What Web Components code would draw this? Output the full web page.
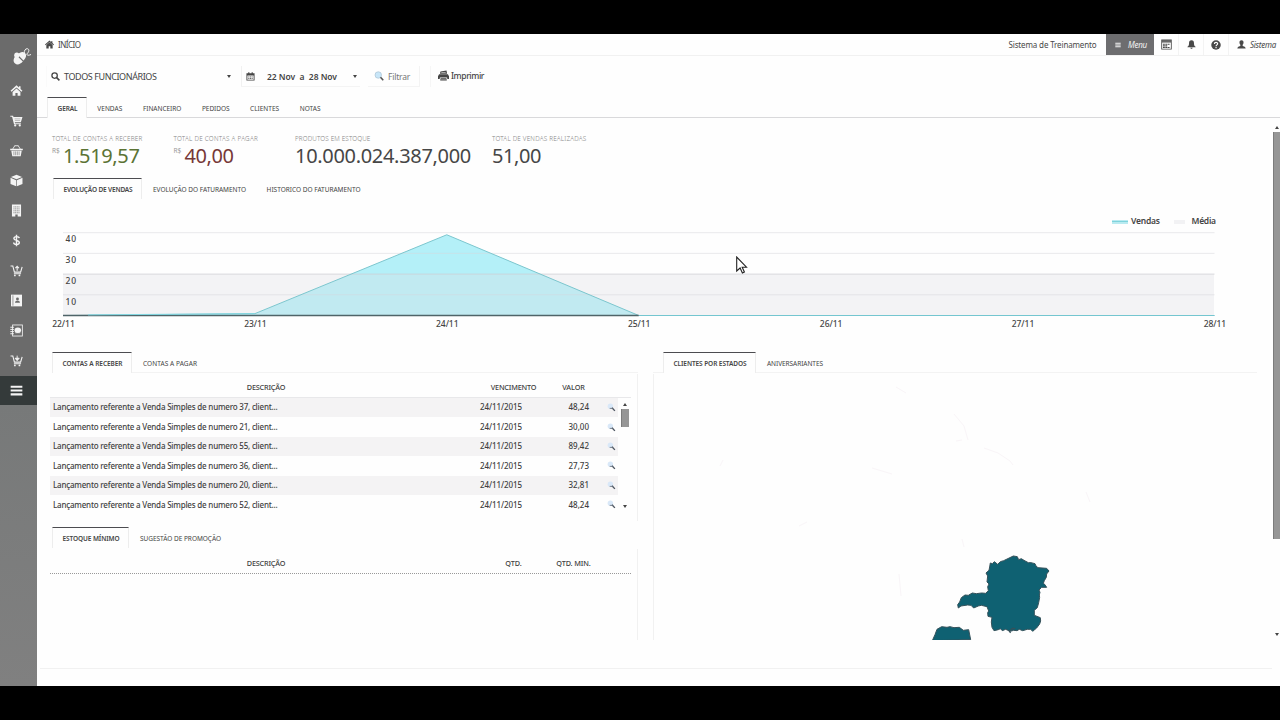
<!DOCTYPE html>
<html lang="pt-BR">
<head>
<meta charset="utf-8">
<title>Início</title>
<style>
  body {
    margin: 0;
    width: 1280px;
    height: 720px;
    overflow: hidden;
    background: #000;
    font-family: "Noto Sans", "Open Sans", sans-serif;
    color: #444;
  }
</style>
</head>
<body>
<dashboard-page></dashboard-page>

<script>
const ICONS = {
  logo: `<g transform="rotate(45 8 12)"><path d="M3.800 11.300C3.800 7.500 5 5 8 5s4.200 2.500 4.200 6.300z"/><path d="M3.500 12.500h9c.3 4-1.500 6.800-4.500 6.800s-4.800-2.800-4.500-6.800z"/></g><circle cx="4.800" cy="9.200" r="2.600"/><path d="M12.300 7.500c-.3-3 1.200-5 3-4.800 2.200.3 1.800 3 .2 4.500s0 3 3.500 1.300" fill="none" stroke="currentColor" stroke-width="1"/>`,
  home: `<path d="M10 1.800.8 10.300l1.600 1.700L10 5.200l7.600 6.800 1.600-1.700-3-2.700V3.500h-2.400v1.800z"/><path d="M4 12.200 10 7l6 5.200V18h-4.300v-4.300H8.300V18H4z"/>`,
  cart: `<path d="M.5 2.500h4.200l.7 2.200h13.800l-2.500 8H7.400l.4 1.500h8.900v1.500H6.200L3.200 4.300H.5z"/><circle cx="8" cy="17.600" r="1.700"/><circle cx="15" cy="17.600" r="1.700"/><path d="M7 7.500h9M7.500 10h8" stroke="#6b6b6b" stroke-width=".6"/>`,
  basket: `<path d="M.3 7.200h19.400v2.300H.3zM2 10.300h16L16.500 19h-13z"/><path d="M4 8 7.500 2.500M16 8l-3.500-5.500M7 2.700h6" stroke="currentColor" stroke-width="1.300"/><path d="M6 11.300v6M8.700 11.300v6M11.300 11.300v6M14 11.300v6" stroke="#6b6b6b" stroke-width=".9"/>`,
  cube: `<path d="M10 1 18.500 4.500 10 8.200 1.500 4.500zM.8 5.800l8.700 3.700v9.500L.8 15.300zM19.200 5.800l-8.700 3.700v9.500l8.700-3.700z"/>`,
  building: `<path d="M3 .8h14v18.400h-5.200v-3H8.200v3H3z"/><path d="M5.300 4.500h9.400M5.300 7.500h9.400M5.300 10.500h9.400M5.300 13.500h9.400" stroke="#6b6b6b" stroke-width="1.200" stroke-dasharray="1.700 .85"/>`,
  dollar: `<path d="M14.300 6.500C14 4.800 12.300 4 10 4 7.600 4 6 5 6 6.800c0 4 8.300 2 8.300 6.300 0 2-1.800 3-4.300 3-2.600 0-4.200-1-4.400-3M10 1v18" fill="none" stroke="currentColor" stroke-width="2.200"/>`,
  cartUp: `<path d="M.8 3h3.500l2.500 9.500h9.500l2.400-8M6 15h11" fill="none" stroke="currentColor" stroke-width="1.700"/><circle cx="7.500" cy="17.600" r="1.400"/><circle cx="14.500" cy="17.600" r="1.400"/><path d="M11 10.500V4M8.300 6.300 11 3.500l2.700 2.800" fill="none" stroke="currentColor" stroke-width="1.700"/>`,
  cartDown: `<path d="M.8 3h3.500l2.500 9.500h9.500l2.400-8M6 15h11" fill="none" stroke="currentColor" stroke-width="1.700"/><circle cx="7.500" cy="17.600" r="1.400"/><circle cx="14.500" cy="17.600" r="1.400"/><path d="M11 2.500v6M7.800 6.500h6.400L11 10.200z" stroke="currentColor" stroke-width="1.400"/>`,
  contact: `<path d="M1.500 1h17v18h-17z"/><path d="M4.500 2v16" stroke="#6b6b6b" stroke-width="1"/><circle cx="11.500" cy="7.500" r="2.200" fill="#6b6b6b"/><path d="M7.700 13.500c.2-2.500 1.800-3.500 3.800-3.500s3.600 1 3.800 3.500z" fill="#6b6b6b"/>`,
  agenda: `<rect x="4" y="1.500" width="15" height="17" fill="none" stroke="currentColor" stroke-width="1.300"/><path d="M.5 5h5.500M.5 8.300H6M.5 11.700H6M.5 15H6" stroke="currentColor" stroke-width="1.500"/><ellipse cx="12" cy="9.700" rx="5" ry="4.200"/><path d="M8 13.500h8" stroke="currentColor" stroke-width="1"/>`,
  bars: `<path d="M1 2.500h18v3.300H1zM1 8.300h18v3.300H1zM1 14.200h18v3.300H1z"/>`,
  house: `<path d="M10 1 0 10l1.500 1.700L10 4.500l8.500 7.200L20 10l-3.500-3.200V2.500h-3v1.700z"/><path d="M3 11 10 5l7 6v8h-5.200v-5H8.200v5H3z"/>`,
  search: `<circle cx="8" cy="8" r="6" fill="none" stroke="currentColor" stroke-width="2.800"/><path d="m12 12 6.700 6.700" stroke="currentColor" stroke-width="3.500"/>`,
  calendar: `<path d="M1 3h4V.8h2.500V3h5V.8H15V3h4v16H1zM3 8v9h14V8z" fill-rule="evenodd"/><path d="M5 11h10M5 14.500h10" stroke="currentColor" stroke-width="1.800" stroke-dasharray="2.500 1.200"/>`,
  lens: `<circle cx="8.500" cy="8" r="6.500" fill="#c8e6f8" stroke="#a9bfd0" stroke-width="1.300"/><path d="m13 12.500 5.500 6" stroke="#555" stroke-width="3.200"/>`,
  rowLens: `<circle cx="7.500" cy="7" r="6" fill="#d9e8f8"/><path d="m11 10.500 6.500 7" stroke="#4d5560" stroke-width="3"/><path d="M6 12h8" stroke="#66707c" stroke-width="1.800"/>`,
  printer: `<path d="M4.500 2.500 15.500 1l1 6h-13zM2 7.500h16l2 4v5H17l-.5-3h-13l-.5 3H0v-5z"/><path d="M5 14.500h10l1 4.500H4z"/><path d="M6 4.500h8M5.500 16.500h9" stroke="#fff" stroke-width="1"/>`,
  window: `<path d="M.5 1h19v18H.5zM2 6.500v11h16v-11z" fill-rule="evenodd"/><path d="M3.500 9.500h13M3.500 12.500h8M3.500 15.500h13" stroke="currentColor" stroke-width="2.100" stroke-dasharray="3.500 .8"/><path d="M2 3.700h16" stroke="#bbb" stroke-width="1"/>`,
  bell: `<path d="M10 .8c4.200 0 5.500 3 5.500 6.500 0 4.500 1 6 3.500 7.700v1.300H1V15c2.500-1.700 3.500-3.200 3.500-7.700C4.500 3.800 5.800.8 10 .8zM7.500 17h5c0 3-5 3-5 0z"/>`,
  help: `<circle cx="10" cy="10" r="9.500"/><path d="M6.800 8C6.800 3.800 13.300 4 13.300 7.600c0 2.200-3.200 2.200-3.200 4.700M10.100 14v2.300" fill="none" stroke="#fff" stroke-width="2.300"/>`,
  user: `<path d="M10 .5c3.500 0 4.800 2.500 4.500 5.500-.2 2.300-1.300 3.700-2 4.500v2.300c1 1.300 6.500 1.700 6.800 6.200H.7c.3-4.500 5.800-4.900 6.800-6.200v-2.300c-.7-.8-1.800-2.200-2-4.500C5.200 3 6.500.5 10 .5z"/>`
};

class UiIcon extends HTMLElement {
  constructor() {
    super();
    this.attachShadow({ mode: "open" });
  }

  connectedCallback() {
    const size = this.getAttribute("size") || 12;
    this.shadowRoot.innerHTML = `
      <style>
        :host { display: block; flex: none; width: ${size}px; height: ${size}px; }
        svg { display: block; width: 100%; height: 100%; fill: currentColor; }
      </style>
      <svg viewBox="0 0 20 20">${ICONS[this.getAttribute("name")] || ""}</svg>
    `;
  }
}

// Label whose tracking is adjusted so that the text fills the width in "w"
class FitText extends HTMLElement {
  constructor() {
    super();
    this.attachShadow({ mode: "open" });
    this.shadowRoot.innerHTML = `
      <style>
        :host { display: block; flex: none; white-space: nowrap; }
        span { display: inline-block; }
      </style>
      <span><slot></slot></span>
    `;
  }

  connectedCallback() {
    const width = parseFloat(this.getAttribute("w"));
    const span = this.shadowRoot.querySelector("span");
    const natural = span.getBoundingClientRect().width;
    const count = this.textContent.length;
    if (!width || !natural || !count) return;
    span.style.letterSpacing = `${(width - natural) / count}px`;
  }
}

class SideBar extends HTMLElement {
  constructor() {
    super();
    this.attachShadow({ mode: "open" });
  }

  connectedCallback() {
    const items = ["home", "cart", "basket", "cube", "building", "dollar", "cartUp", "contact", "agenda", "cartDown"];
    this.shadowRoot.innerHTML = `
      <style>
        :host {
          display: flex;
          flex-direction: column;
          background: linear-gradient(#6b6b6b 0, #6b6b6b 371px, #777979 371px, #808080 100%);
          color: #f4f4f4;
        }
        .logo { height: 41px; display: flex; align-items: center; justify-content: center; padding: 3px 0 0 6px; box-sizing: border-box; }
        .item { height: 30.1px; display: flex; align-items: center; justify-content: center; padding-right: 4px; }
        .active { background: #343a3a; height: 29px; }
      </style>
      <div class="logo"><ui-icon name="logo" size="20"></ui-icon></div>
      ${items.map((name) => `<div class="item"><ui-icon name="${name}" size="13"></ui-icon></div>`).join("")}
      <div class="item active"><ui-icon name="bars" size="13"></ui-icon></div>
    `;
  }
}

class TopBar extends HTMLElement {
  constructor() {
    super();
    this.attachShadow({ mode: "open" });
  }

  connectedCallback() {
    this.shadowRoot.innerHTML = `
      <style>
        :host {
          display: flex;
          align-items: stretch;
          height: 21px;
          border-bottom: 1px solid #f1f1f1;
          font-size: 8px;
          color: #484848;
        }
        div { display: flex; align-items: center; box-sizing: border-box; }
        .crumb { padding-left: 8px; gap: 4px; flex: 1; }
        .company { padding-right: 9.500px; }
        .menu { width: 48px; background: #6d6d6f; color: #f3f3f3; gap: 7px; padding-left: 9px; font-style: italic; }
        .tool { width: 25px; justify-content: center; border-right: 1px solid #f3f3f3; }
        .user { width: 51px; padding-left: 8px; gap: 4px; font-style: italic; }
      </style>
      <div class="crumb"><ui-icon name="house" size="9"></ui-icon><fit-text w="22.500">INÍCIO</fit-text></div>
      <div class="company"><fit-text w="88">Sistema de Treinamento</fit-text></div>
      <div class="menu"><ui-icon name="bars" size="6"></ui-icon><fit-text w="19">Menu</fit-text></div>
      <div class="tool"><ui-icon name="window" size="11"></ui-icon></div>
      <div class="tool"><ui-icon name="bell" size="9"></ui-icon></div>
      <div class="tool"><ui-icon name="help" size="10"></ui-icon></div>
      <div class="user"><ui-icon name="user" size="9"></ui-icon><fit-text w="26">Sistema</fit-text></div>
    `;
  }
}

class FilterBar extends HTMLElement {
  constructor() {
    super();
    this.attachShadow({ mode: "open" });
  }

  connectedCallback() {
    this.shadowRoot.innerHTML = `
      <style>
        :host {
          display: flex;
          align-items: center;
          height: 41px;
          padding-left: 9px;
          font-size: 9px;
          color: #444;
        }
        div { display: flex; align-items: center; height: 21px; box-sizing: border-box; }
        .employee { width: 195px; padding-left: 4px; gap: 4px; border-left: 1px solid #fafafa; }
        .period { width: 119px; padding-left: 4px; border-left: 1px solid #f1f1f1; border-bottom: 1px solid #f4f4f4; font-size: 8.500px; font-weight: 600; }
        .period fit-text { margin-left: 12px; }
        .filter { width: 52px; margin-left: 8px; padding-left: 6px; gap: 4px; border-right: 1px solid #f3f3f3; border-bottom: 1px solid #f4f4f4; font-size: 8.500px; color: #777; }
        .print { margin-left: 10px; padding: 0 0 2px 7px; gap: 2px; border-left: 1px solid #f6f6f6; font-size: 8.500px; font-weight: 500; }
        .caret { margin-left: auto; margin-right: 10px; border: 2.500px solid transparent; border-top: 3px solid #444; border-bottom: 0; }
        .period .caret { margin-right: 3px; }
      </style>
      <div class="employee"><ui-icon name="search" size="9"></ui-icon><fit-text w="92.500">TODOS FUNCIONÁRIOS</fit-text><i class="caret"></i></div>
      <div class="period"><ui-icon name="calendar" size="9"></ui-icon><fit-text w="70">22 Nov&nbsp; a&nbsp; 28 Nov</fit-text><i class="caret"></i></div>
      <div class="filter"><ui-icon name="lens" size="10"></ui-icon><fit-text w="22">Filtrar</fit-text></div>
      <div class="print"><ui-icon name="printer" size="11"></ui-icon><fit-text w="33">Imprimir</fit-text></div>
    `;
  }
}

class TabItem extends HTMLElement {
  constructor() {
    super();
    this.attachShadow({ mode: "open" });
    this.shadowRoot.innerHTML = `
      <style>
        :host {
          display: flex;
          align-items: center;
          box-sizing: border-box;
          padding: 0 10.300px;
          border-top: 1px solid transparent;
        }
        :host([active]) {
          padding: 0 8.500px 0 9.500px;
          border: 1px solid #ededed;
          border-top-color: #4c4c50;
          border-bottom: 0;
          background: #fefefe;
          font-weight: 600;
        }
      </style>
      <slot></slot>
    `;
  }
}

class TabStrip extends HTMLElement {
  constructor() {
    super();
    this.attachShadow({ mode: "open" });
    this.shadowRoot.innerHTML = `
      <style>
        :host { display: flex; height: 21px; font-size: 6.500px; color: #444; box-sizing: border-box; }
        ::slotted(*) { height: 100%; }
        :host([lined]) { box-shadow: inset 0 -1px #f3f3f3; }
      </style>
      <slot></slot>
    `;
  }
}

class StatCard extends HTMLElement {
  constructor() {
    super();
    this.attachShadow({ mode: "open" });
  }

  connectedCallback() {
    const unit = this.getAttribute("unit");
    this.shadowRoot.innerHTML = `
      <style>
        :host { display: block; color: #464646; }
        .label { height: 11px; line-height: 11px; font-size: 6.300px; color: #858585; font-weight: 300; }
        .value { display: flex; height: 23px; line-height: 23px; font-size: 20px; }
        .unit { font-size: 6.500px; line-height: 14px; width: 11px; color: #999; }
      </style>
      <div class="label"><fit-text w="${this.getAttribute("label-w")}">${this.getAttribute("label")}</fit-text></div>
      <div class="value">
        ${unit ? `<div class="unit">${unit}</div>` : ""}
        <fit-text w="${this.getAttribute("value-w")}">${this.getAttribute("value")}</fit-text>
      </div>
    `;
  }
}

class SalesChart extends HTMLElement {
  constructor() {
    super();
    this.attachShadow({ mode: "open" });
  }

  connectedCallback() {
    const days = ["22/11", "23/11", "24/11", "25/11", "26/11", "27/11", "28/11"];
    const values = [0, 0.9, 39, 0, 0, 0, 0];
    const x = (i) => 26 + i * 191.9;
    const y = (v) => 115.5 - v * 2.07;
    const points = values.map((v, i) => `${x(i)},${y(v)}`).join(" ");

    const grid = [40, 30, 20, 10].map((v) => `
      <path d="M26 ${y(v)}H1177.500" stroke="${v === 20 ? "#cfcfd3" : "#d8d8dc"}" stroke-opacity="${v === 20 ? 0.75 : 0.5}"/>
      <text x="28.500" y="${y(v) + 9.700}" textLength="10.500">${v}</text>`).join("");

    const labels = days.map((day, i) => `<text x="${x(i) + 0.5}" y="126.800" text-anchor="middle" textLength="22.500">${day}</text>`).join("");

    this.shadowRoot.innerHTML = `
      <style>
        :host { display: block; height: 152px; }
        svg { display: block; overflow: visible; }
        text { font-size: 8.500px; fill: #444; font-weight: 500; }
      </style>
      <svg width="1236" height="152" viewBox="0 0 1236 152">
        <rect x="1075" y="20" width="16" height="4" fill="#b9eaf0"/>
        <path d="M1075 21.500h16" stroke="#7fd3dc"/>
        <text x="1094" y="24" textLength="29" style="font-weight:600">Vendas</text>
        <rect x="1137" y="20" width="11" height="4" fill="#f2f2f4"/>
        <text x="1154.500" y="24" textLength="24.500" style="font-weight:600">Média</text>
        <polygon points="${points}" fill="#b4f0f8"/>
        <rect x="26" y="${y(20)}" width="1151" height="${y(0) - y(20)}" fill="#dcdce3" fill-opacity=".32"/>
        ${grid}
        <polyline points="${points}" fill="none" stroke="#7cc6ce"/>
        <path d="M${x(3)} ${y(0)}H1177.500" stroke="#74c6d0"/>
        <path d="M26 ${y(0)}H${x(3)}" stroke="#4f6468" stroke-width="1.300"/>
        <path d="M${x(0) + 25} ${y(0.3)}L${x(1)} ${y(0.9)}" stroke="#83d8e2"/>
        ${labels}
      </svg>
    `;
  }
}

class DataTable extends HTMLElement {
  constructor() {
    super();
    this.attachShadow({ mode: "open" });
  }

  connectedCallback() {
    const heads = JSON.parse(this.getAttribute("heads"));
    const rows = JSON.parse(this.getAttribute("rows") || "[]");
    this.shadowRoot.innerHTML = `
      <style>
        :host { display: block; font-size: 8px; color: #3f3f3f; }
        .head, .row { display: grid; grid-template-columns: 430px 65px 55px 18px; align-items: center; }
        .head { height: 24px; width: 581px; padding: 3px 0 0 1px; box-sizing: border-box; border-bottom: 1px solid #e8e8ea; font-size: 7.300px; justify-items: center; font-weight: 500; }
        :host([dotted]) .head { height: 25px; border-bottom: 1px dotted #999; }
        .body { display: flex; }
        .row { height: 19.430px; width: 568px; font-weight: 500; }
        .row:nth-child(odd) { background: linear-gradient(#f4f3f4 18.500px, transparent 0); }
        .row fit-text { margin-top: -1.500px; }
        .desc { padding-left: 3px; }
        .value { justify-self: end; padding-right: 11px; }
        ui-icon { justify-self: center; position: relative; left: 2px; }
      </style>
      <div class="head">${heads.map(([text, w]) => `<fit-text w="${w}">${text}</fit-text>`).join("")}</div>
      <div class="body">
        <div>
          ${rows.map(([n, value]) => `
            <div class="row">
              <fit-text class="desc" w="224.500">Lançamento referente a Venda Simples de numero ${n}, client...</fit-text>
              <fit-text w="42">24/11/2015</fit-text>
              <fit-text class="value" w="20.500">${value}</fit-text>
              <ui-icon name="rowLens" size="9"></ui-icon>
            </div>`).join("")}
        </div>
        <slot></slot>
      </div>
    `;
  }
}

class ScrollTrack extends HTMLElement {
  constructor() {
    super();
    this.attachShadow({ mode: "open" });
  }

  connectedCallback() {
    this.shadowRoot.innerHTML = `
      <style>
        :host { display: flex; flex-direction: column; align-items: center; flex: none; }
        i { border: 2.500px solid transparent; border-top: 0; border-bottom: 3px solid #444; }
        i:last-child { border: 2.500px solid transparent; border-bottom: 0; border-top: 3px solid #444; margin-top: auto; }
        .thumb { width: 100%; box-sizing: border-box; height: ${this.getAttribute("thumb")}px; margin-top: 3px; background: #969696; border-left: 1px solid #7c7c7c; }
      </style>
      <i></i><div class="thumb"></div><i></i>
    `;
  }
}

class StatesMap extends HTMLElement {
  constructor() {
    super();
    this.attachShadow({ mode: "open" });
  }

  connectedCallback() {
    this.shadowRoot.innerHTML = `
      <style>
        :host { display: block; height: 266px; overflow: hidden; }
        svg { display: block; }
      </style>
      <svg width="600" height="266" viewBox="0 0 600 266">
        <g fill="none" stroke="#f9f5f8" stroke-width="1">
          <path d="M242 13l10 6M300 40l10 12 4 14M308 66l-6 1M330 74l14 5 12 8 3 4M66 92l3-6M218 94l20 6M432 118l4 10M145 152l8-4M245 200l2 22M308 165l2 8"/>
        </g>
        <g transform="translate(246 166) scale(.3333)" fill="#0f6172" stroke="#35515a" stroke-width="3" stroke-linejoin="round">
          <path d="M340 48l12 2 4 9 8-3 8 5 13 7 8 0 12 3 3 7 6 5 26 2 7 8-7 9-1 10-6 10-3 8 4 3 6 9-15 0-8 8 3 7-2 8 1 7-3 16-4 15-9 8 0 15 18 7 1 10-3 9-9 12-12 10-6-6-10 0-14 4-10-4-7 4-10-1-10 3-14-6-10 4-6-6-6 3-13 3-6-10-2-16 2-14-12-3-1-11 3-5-5-13-17-4-9 2-14 6-8-8-10-1-20 3-8 6-2-10 6-8 5-13 11-8 10 1 12-7 12 2 16-2 12 1 8-8-2-12 4-8-6-6 2-18-5-9 9-8 2-10 2-12 6 2 6-6 10 8 8-8 10-3z"/>
          <path d="M97 302l8-18 6-16 14-8 16 2 9-2 12 3 16-1 12 9 16-2 6 30z"/>
          <path d="M332 278l-4-4 10-9 8 1" fill="none" stroke-width="4"/>
        </g>
      </svg>
    `;
  }
}

class DashboardPage extends HTMLElement {
  constructor() {
    super();
    this.attachShadow({ mode: "open" });
  }

  connectedCallback() {
    const receivable = [[37, "48,24"], [21, "30,00"], [55, "89,42"], [36, "27,73"], [20, "32,81"], [52, "48,24"]];
    this.shadowRoot.innerHTML = `
      <style>
        :host {
          display: grid;
          grid-template-columns: 37px 1243px;
          height: 652px;
          margin: 34px 0;
          background: #fefefe;
          position: relative;
        }
        main { display: flex; flex-direction: column; min-width: 0; }
        .tabs { padding-left: 10px; border-bottom: 1px solid #d9d9db; height: 20px; }
        .tabs tab-strip { height: 21px; }
        .scroll { display: flex; height: 522px; overflow: hidden; }
        .content { width: 1236px; }
        .stats { display: grid; grid-template-columns: 121.500px 121.500px 197px auto; padding: 15px 0 0 15px; height: 45px; }
        .sub { padding-left: 16px; height: 21px; margin-bottom: 1px; }
        .halves { display: grid; grid-template-columns: 601px 604px; gap: 15px; }
        .panel { border-right: 1px solid #f1f1f1; padding-left: 13px; }
        .left tab-strip { margin-left: 15px; height: 21px; margin-bottom: 1px; }
        .left tab-strip:nth-of-type(2) { margin-top: 6px; }
        .receive { height: 147px; }
        .stock { height: 92px; }
        .right tab-strip { padding-left: 10px; height: 21px; margin-bottom: 1px; }
        .map { border-left: 1px solid #f1f1f1; }
        scroll-track { width: 7px; padding-top: 8px; height: 518px; box-sizing: border-box; }
        scroll-track.small { width: 8px; margin-left: 3px; padding: 5px 0 5px; height: 115px; }
        footer { height: 28px; border-bottom: 1px solid #f1f1f1; margin-left: 3px; width: 1232px; }
        .cursor { position: absolute; left: 736px; top: 222px; }
      </style>
      <side-bar></side-bar>
      <main>
        <top-bar></top-bar>
        <filter-bar></filter-bar>
        <div class="tabs">
          <tab-strip>
            <tab-item active><fit-text w="20">GERAL</fit-text></tab-item>
            <tab-item><fit-text w="25">VENDAS</fit-text></tab-item>
            <tab-item><fit-text w="38.500">FINANCEIRO</fit-text></tab-item>
            <tab-item><fit-text w="27.500">PEDIDOS</fit-text></tab-item>
            <tab-item><fit-text w="29">CLIENTES</fit-text></tab-item>
            <tab-item><fit-text w="21">NOTAS</fit-text></tab-item>
          </tab-strip>
        </div>
        <div class="scroll">
          <div class="content">
            <div class="stats">
              <stat-card label="TOTAL DE CONTAS A RECEBER" label-w="90.500" unit="R$" value="1.519,57" value-w="76.500" style="color:#5b7334"></stat-card>
              <stat-card label="TOTAL DE CONTAS A PAGAR" label-w="84.500" unit="R$" value="40,00" value-w="49" style="color:#763838"></stat-card>
              <stat-card label="PRODUTOS EM ESTOQUE" label-w="75.500" value="10.000.024.387,000" value-w="176"></stat-card>
              <stat-card label="TOTAL DE VENDAS REALIZADAS" label-w="94.500" value="51,00" value-w="49"></stat-card>
            </div>
            <tab-strip class="sub">
              <tab-item active><fit-text w="69">EVOLUÇÃO DE VENDAS</fit-text></tab-item>
              <tab-item style="padding-left:11px"><fit-text w="93">EVOLUÇÃO DO FATURAMENTO</fit-text></tab-item>
              <tab-item><fit-text w="94">HISTORICO DO FATURAMENTO</fit-text></tab-item>
            </tab-strip>
            <sales-chart></sales-chart>
            <div class="halves">
              <div class="left">
                <tab-strip lined>
                  <tab-item active><fit-text w="60">CONTAS A RECEBER</fit-text></tab-item>
                  <tab-item style="padding-left:11px"><fit-text w="54">CONTAS A PAGAR</fit-text></tab-item>
                </tab-strip>
                <div class="panel receive">
                  <data-table heads='[["DESCRIÇÃO",38.500],["VENCIMENTO",45.500],["VALOR",22.500]]' rows='${JSON.stringify(receivable)}'>
                    <scroll-track class="small" thumb="18"></scroll-track>
                  </data-table>
                </div>
                <tab-strip>
                  <tab-item active><fit-text w="57">ESTOQUE MÍNIMO</fit-text></tab-item>
                  <tab-item style="padding-left:11px"><fit-text w="81">SUGESTÃO DE PROMOÇÃO</fit-text></tab-item>
                </tab-strip>
                <div class="panel stock">
                  <data-table dotted heads='[["DESCRIÇÃO",38.500],["QTD.",16.500],["QTD. MIN.",34.500]]'></data-table>
                </div>
              </div>
              <div class="right">
                <tab-strip lined>
                  <tab-item active><fit-text w="73">CLIENTES POR ESTADOS</fit-text></tab-item>
                  <tab-item style="padding-left:11px"><fit-text w="56">ANIVERSARIANTES</fit-text></tab-item>
                </tab-strip>
                <div class="map"><states-map></states-map></div>
              </div>
            </div>
          </div>
          <scroll-track thumb="407"></scroll-track>
        </div>
        <footer></footer>
      </main>
      <svg class="cursor" width="12" height="18" viewBox="0 0 12 18">
        <path d="M.7 1v14l3.400-3 2.300 5 2-1-2.200-4.800h4.300z" fill="#fff" stroke="#222" stroke-width="1.100"/>
      </svg>
    `;
  }
}

customElements.define("dashboard-page", DashboardPage);
customElements.define("side-bar", SideBar);
customElements.define("top-bar", TopBar);
customElements.define("filter-bar", FilterBar);
customElements.define("tab-strip", TabStrip);
customElements.define("tab-item", TabItem);
customElements.define("stat-card", StatCard);
customElements.define("sales-chart", SalesChart);
customElements.define("data-table", DataTable);
customElements.define("scroll-track", ScrollTrack);
customElements.define("states-map", StatesMap);
customElements.define("ui-icon", UiIcon);
// Defined last: it measures text, so the surrounding styles have to be in place
customElements.define("fit-text", FitText);
</script>
</body>
</html>
